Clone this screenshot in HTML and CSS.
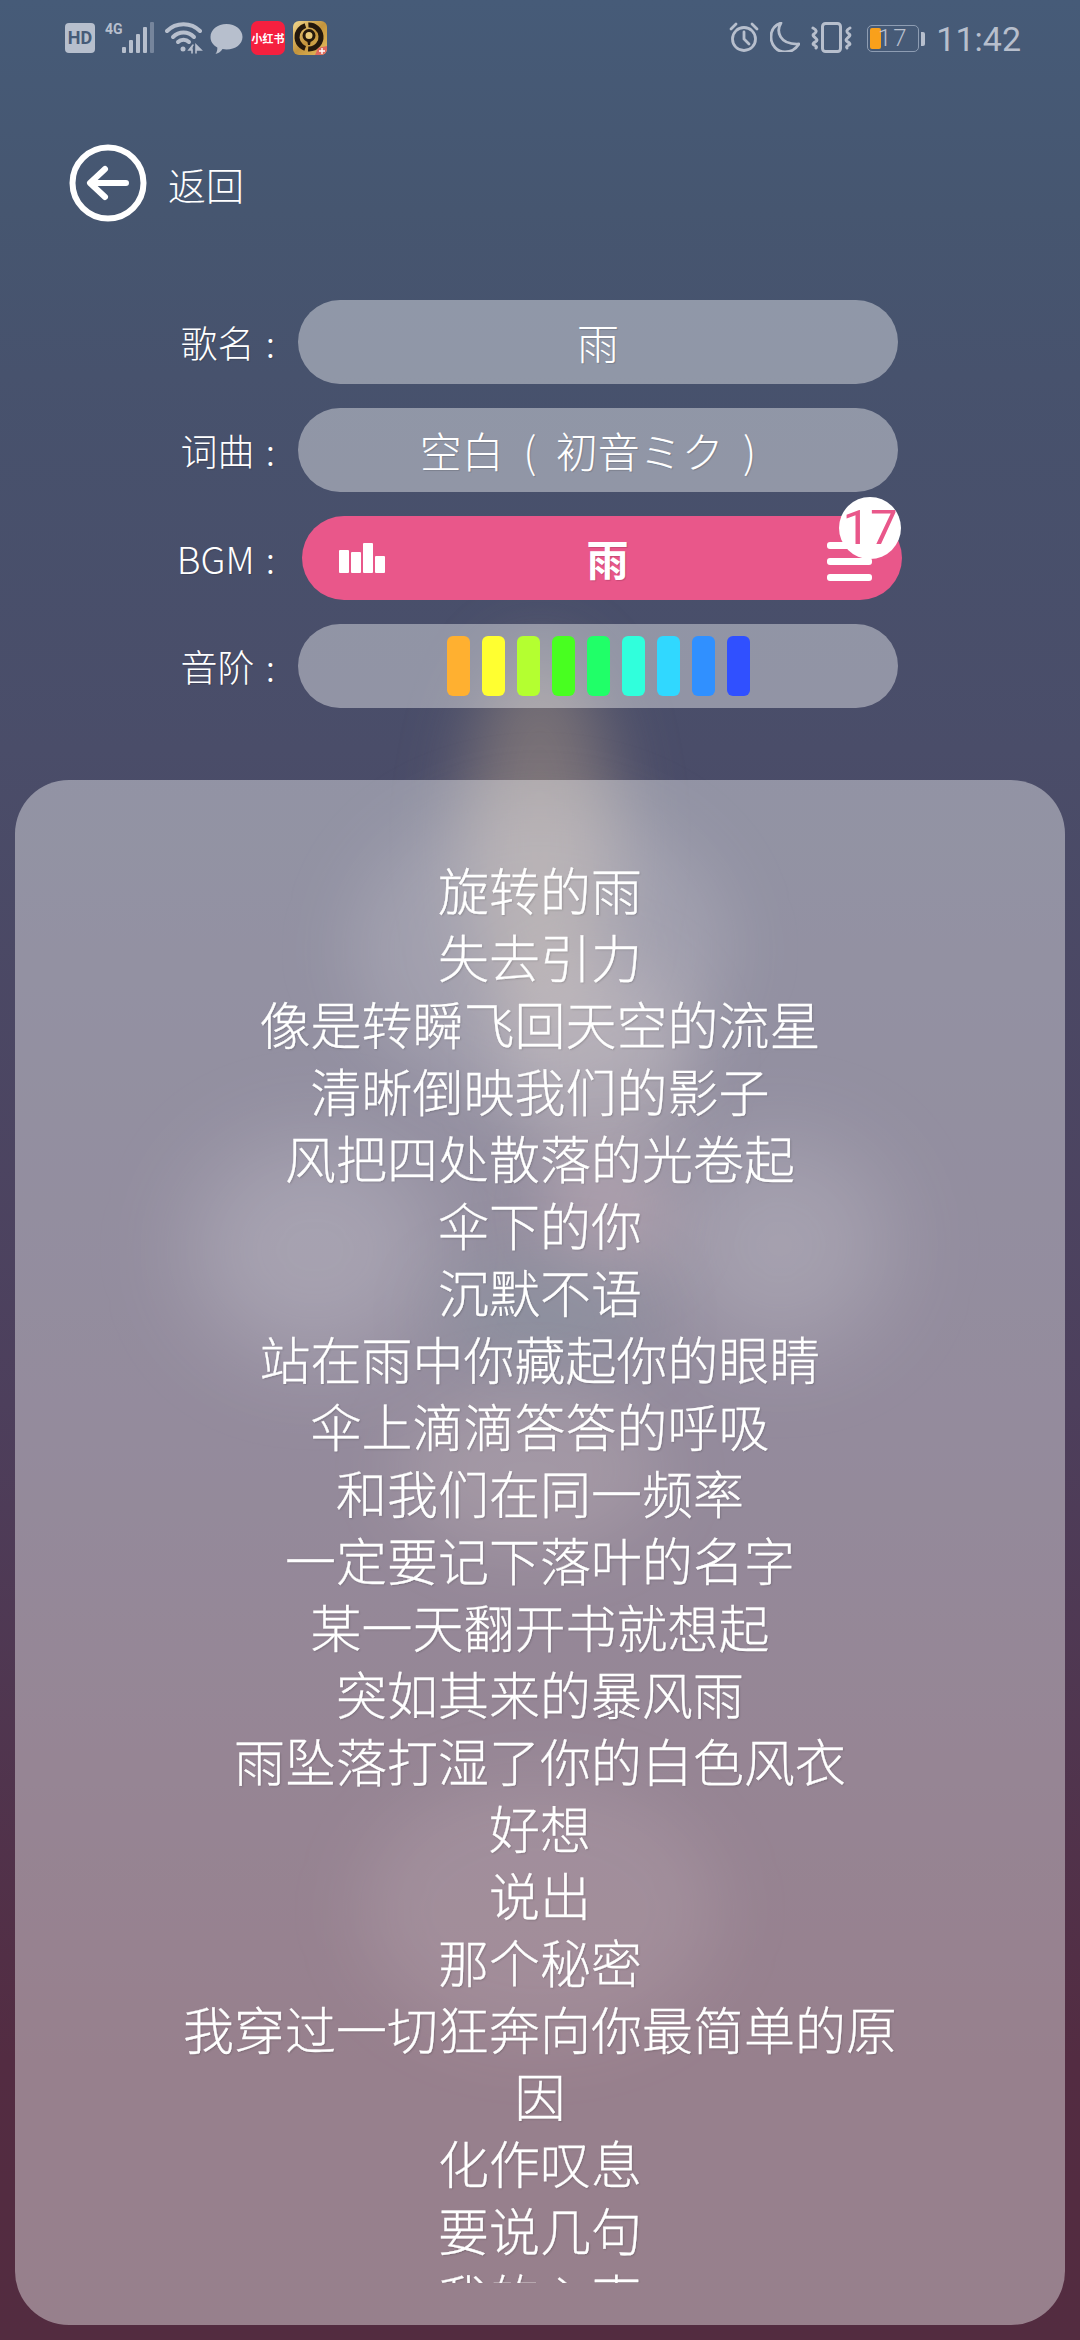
FILE: index.html
```html
<!DOCTYPE html>
<html lang="zh-CN">
<head>
    <meta charset="UTF-8">
    <meta name="viewport" content="width=device-width, initial-scale=1.0">
    <title>雨</title>
    <link rel="stylesheet" href="styles.css">
</head>
<body>
    <!-- blurred cover picture behind everything -->
    <div class="cover">
        <div class="blob blob-neck"></div>
        <div class="blob blob-head"></div>
        <div class="blob blob-streak"></div>
        <div class="blob blob-hair-left"></div>
        <div class="blob blob-hair-right"></div>
        <div class="blob blob-cheek"></div>
        <div class="blob blob-dark"></div>
        <div class="blob blob-chest"></div>
        <div class="blob blob-skirt"></div>
    </div>

    <div class="page">
        <div class="status-bar">
            <div class="status-left">
                <svg class="icon-hd" width="30" height="30" viewBox="0 0 30 30">
                    <rect width="30" height="30" rx="4" fill="#b7bfcd"/>
                    <text x="15" y="21" text-anchor="middle" class="hd-text">HD</text>
                </svg>
                <svg class="icon-signal" width="50" height="32" viewBox="0 0 50 32">
                    <text x="0" y="12" class="net-text">4G</text>
                    <rect x="17" y="25" width="4" height="6" rx="1" fill="#b7bfcd"/>
                    <rect x="24" y="18" width="4" height="13" rx="1" fill="#b7bfcd"/>
                    <rect x="31" y="12" width="4" height="19" rx="1" fill="#b7bfcd"/>
                    <rect x="38" y="5" width="4" height="26" rx="1" fill="#b7bfcd"/>
                    <rect x="45" y="0" width="4" height="31" rx="1" fill="#76859c"/>
                </svg>
                <svg class="icon-wifi" width="38" height="32" viewBox="0 0 38 32" fill="none" stroke="#b7bfcd" stroke-width="4" stroke-linecap="round">
                    <path d="M2 9C11 0 26 0 35 9"/>
                    <path d="M8 15C14 9 23 9 29 15"/>
                    <path d="M13 20C16 17 21 17 24 20"/>
                    <circle cx="18" cy="27" r="2.5" fill="#b7bfcd" stroke="none"/>
                    <path d="M28 23L24 28H27V31M31 31V23L36 28H31" stroke-width="1.6" fill="#b7bfcd"/>
                </svg>
                <svg class="icon-msg" width="33" height="32" viewBox="0 0 33 32">
                    <path d="M16.5 1C25.6 1 32.5 6.800 32.500 14C32.500 21.200 25.600 26.500 16.500 26.500C15 26.500 13.700 26.400 12.500 26.100C11 28.500 8.500 30.500 5.500 31C7 29 7.500 26.500 7.300 24.500C3 22.200 .5 18.500 .5 14C.5 6.800 7.400 1 16.500 1Z" fill="#b7bfcd"/>
                </svg>
                <div class="app-red">小红书</div>
                <svg class="app-game" width="34" height="34" viewBox="0 0 34 34">
                    <defs>
                        <linearGradient id="gameGold" x1="0" y1="0" x2="1" y2="1">
                            <stop offset="0" stop-color="#f2d88e"/>
                            <stop offset="0.5" stop-color="#c4943c"/>
                            <stop offset="1" stop-color="#e8c060"/>
                        </linearGradient>
                    </defs>
                    <rect width="34" height="34" rx="6" fill="url(#gameGold)"/>
                    <circle cx="16" cy="16" r="12" fill="none" stroke="#24180c" stroke-width="5" stroke-dasharray="30 3 30 3" transform="rotate(-50 16 16)"/>
                    <circle cx="16" cy="14.500" r="5" fill="#e8c878" stroke="#24180c" stroke-width="3"/>
                    <path d="M14 18.500H18L17 24H15Z" fill="#24180c"/>
                    <path d="M22 34L25 27L34 25V28C34 31 31 34 28 34Z" fill="#e0685e"/>
                    <path d="M26 30H32M29 27V33" stroke="#fff" stroke-width="1.400"/>
                </svg>
            </div>
            <div class="status-right">
                <svg class="icon-alarm" width="30" height="30" viewBox="0 0 30 30" fill="none" stroke="#b7bfcd" stroke-width="2.800" stroke-linecap="round">
                    <circle cx="15" cy="17" r="11.500"/>
                    <path d="M15 10V17L20 22"/>
                    <path d="M2 7L7 2M28 7L23 2"/>
                </svg>
                <svg class="icon-moon" width="30" height="30" viewBox="0 0 30 30">
                    <path d="M11 1C6 9 9 23 29 22C26 27 21 30 15 30C7 30 1 23 1 15C1 8 5 3 11 1Z" fill="none" stroke="#b7bfcd" stroke-width="2.800" stroke-linejoin="round"/>
                </svg>
                <svg class="icon-vibrate" width="42" height="31" viewBox="0 0 42 31" fill="none" stroke="#b7bfcd" stroke-linecap="round">
                    <rect x="11.500" y="1.500" width="18" height="28" rx="3" stroke-width="3"/>
                    <path d="M2 6C6 8 6 10 3 12C0 14 6 16 6 18C6 20 0 21 3 23C5 24 6 25 5 26" stroke-width="3"/>
                    <path d="M39 6C35 8 35 10 38 12C41 14 35 16 35 18C35 20 41 21 38 23C36 24 35 25 36 26" stroke-width="3"/>
                </svg>
                <div class="battery">
                    <div class="battery-body">
                        <div class="battery-fill"></div>
                        <span class="battery-text">17</span>
                    </div>
                    <div class="battery-nub"></div>
                </div>
                <span class="clock">11:42</span>
            </div>
        </div>

        <div class="back-row">
            <svg class="back-icon" width="78" height="78" viewBox="0 0 78 78" fill="none" stroke="#fff" stroke-linecap="round" stroke-linejoin="round">
                <circle cx="39" cy="39" r="35.500" stroke-width="6"/>
                <path d="M57 39H22M36 25L21 39L36 53" stroke-width="6"/>
            </svg>
            <span class="back-text">返回</span>
        </div>

        <div class="form">
            <div class="form-row">
                <span class="form-label">歌名 :</span>
                <div class="pill">雨</div>
            </div>
            <div class="form-row">
                <span class="form-label">词曲 :</span>
                <div class="pill pill-credit">空白 ( 初音ミク )</div>
            </div>
            <div class="form-row">
                <span class="form-label">BGM :</span>
                <div class="pill pill-bgm">
                    <svg class="bgm-bars" width="47" height="30" viewBox="0 0 47 30" fill="#fff">
                        <rect x="0" y="7" width="10" height="23" rx="1"/>
                        <rect x="12" y="9" width="10" height="21" rx="1"/>
                        <rect x="24" y="0" width="10" height="30" rx="1"/>
                        <rect x="36" y="13" width="10" height="17" rx="1"/>
                    </svg>
                    <span class="bgm-name">雨</span>
                    <div class="bgm-menu">
                        <span class="menu-line"></span>
                        <span class="menu-line"></span>
                        <span class="menu-line"></span>
                        <span class="bgm-badge">17</span>
                    </div>
                </div>
            </div>
            <div class="form-row">
                <span class="form-label">音阶 :</span>
                <div class="pill pill-scale">
                    <span class="note note-1"></span>
                    <span class="note note-2"></span>
                    <span class="note note-3"></span>
                    <span class="note note-4"></span>
                    <span class="note note-5"></span>
                    <span class="note note-6"></span>
                    <span class="note note-7"></span>
                    <span class="note note-8"></span>
                    <span class="note note-9"></span>
                </div>
            </div>
        </div>

        <div class="lyrics-panel">
            <div class="lyrics">
                <p>旋转的雨</p>
                <p>失去引力</p>
                <p>像是转瞬飞回天空的流星</p>
                <p>清晰倒映我们的影子</p>
                <p>风把四处散落的光卷起</p>
                <p>伞下的你</p>
                <p>沉默不语</p>
                <p>站在雨中你藏起你的眼睛</p>
                <p>伞上滴滴答答的呼吸</p>
                <p>和我们在同一频率</p>
                <p>一定要记下落叶的名字</p>
                <p>某一天翻开书就想起</p>
                <p>突如其来的暴风雨</p>
                <p>雨坠落打湿了你的白色风衣</p>
                <p>好想</p>
                <p>说出</p>
                <p>那个秘密</p>
                <p>我穿过一切狂奔向你最简单的原因</p>
                <p>化作叹息</p>
                <p>要说几句</p>
                <p>我的心声</p>
            </div>
        </div>
    </div>
</body>
</html>
```

FILE: styles.css
```css
* {
    box-sizing: border-box;
}

body {
    margin: 0;
    width: 1080px;
    height: 2340px;
    overflow: hidden;
    position: relative;
    font-family: "Noto Sans CJK SC", "Noto Sans", sans-serif;
    font-weight: 300;
    color: #fff;
    background: linear-gradient(180deg, #465b78 0%, #465670 9%, #47526d 16%, #4a4d69 32%, #4d3f5c 60%, #532c42 88%, #532c40 100%);
}

/* blurred picture */
.cover {
    position: absolute;
    inset: 0;
    overflow: hidden;
}

.blob {
    position: absolute;
    border-radius: 50%;
    filter: blur(34px);
}

.blob-neck {
    left: 465px;
    top: 650px;
    width: 150px;
    height: 380px;
    background: rgba(195, 170, 140, 0.4);
}

.blob-head {
    left: 350px;
    top: 800px;
    width: 380px;
    height: 300px;
    background: rgba(215, 210, 215, 0.18);
}

.blob-streak {
    left: 500px;
    top: 960px;
    width: 190px;
    height: 200px;
    background: rgba(225, 205, 190, 0.25);
}

.blob-hair-left {
    left: 190px;
    top: 1140px;
    width: 250px;
    height: 220px;
    filter: blur(45px);
    background: rgba(225, 225, 230, 0.22);
}

.blob-hair-right {
    left: 670px;
    top: 1140px;
    width: 220px;
    height: 210px;
    filter: blur(45px);
    background: rgba(225, 225, 230, 0.2);
}

.blob-cheek {
    left: 540px;
    top: 1150px;
    width: 130px;
    height: 120px;
    background: rgba(225, 170, 175, 0.28);
}

.blob-dark {
    left: 440px;
    top: 1270px;
    width: 210px;
    height: 90px;
    background: rgba(50, 85, 100, 0.38);
}

.blob-chest {
    left: 400px;
    top: 1390px;
    width: 260px;
    height: 160px;
    background: rgba(215, 190, 175, 0.18);
}

.blob-skirt {
    left: 360px;
    top: 1780px;
    width: 360px;
    height: 260px;
    background: rgba(215, 185, 190, 0.14);
}

.page {
    position: relative;
    height: 100%;
    display: flex;
    flex-direction: column;
}

/* status bar */
.status-bar {
    height: 75px;
    padding: 21px 59px 0 65px;
    display: flex;
    justify-content: space-between;
    align-items: flex-start;
}

.status-left,
.status-right {
    display: flex;
    align-items: flex-start;
}

.icon-hd {
    margin-top: 2px;
}

.hd-text {
    font-family: "Roboto", sans-serif;
    font-size: 18px;
    font-weight: 700;
    fill: #465b78;
}

.icon-signal {
    margin-left: 10px;
    margin-top: 1px;
}

.net-text {
    font-family: "Roboto", sans-serif;
    font-size: 14px;
    font-weight: 700;
    fill: #b7bfcd;
}

.icon-wifi {
    margin-left: 10px;
    margin-top: 1px;
}

.icon-msg {
    margin-left: 7px;
    margin-top: 2px;
}

.app-red {
    width: 34px;
    height: 34px;
    margin-left: 8px;
    border-radius: 7px;
    background: #f5203f;
    color: #fff;
    font-size: 11px;
    font-weight: 700;
    line-height: 34px;
    text-align: center;
    white-space: nowrap;
}

.app-game {
    margin-left: 8px;
}

.status-right {
    margin-top: 1px;
}

.icon-moon {
    margin-left: 11px;
}

.icon-vibrate {
    margin-left: 11px;
}

.battery {
    display: flex;
    align-items: center;
    margin-left: 14px;
    margin-top: 3px;
}

.battery-body {
    position: relative;
    width: 52px;
    height: 27px;
    border: 1.5px solid #8e9db3;
    border-radius: 5px;
    text-align: center;
}

.battery-fill {
    position: absolute;
    left: 2px;
    top: 2px;
    bottom: 2px;
    width: 11px;
    background: #f9a01b;
    border-radius: 2px;
}

.battery-text {
    position: relative;
    font-family: "Roboto", sans-serif;
    font-size: 24px;
    font-weight: 300;
    line-height: 24px;
    letter-spacing: 2px;
    color: #b7bfcd;
    display: block;
}

.battery-nub {
    width: 4px;
    height: 14px;
    margin-left: 2px;
    background: #b7bfcd;
    border-radius: 0 2px 2px 0;
}

.clock {
    margin-left: 11px;
    font-family: "Roboto", sans-serif;
    font-size: 34px;
    font-weight: 400;
    line-height: 34px;
    color: #b7bfcd;
}

/* back button */
.back-row {
    margin-top: 69px;
    padding-left: 69px;
    display: flex;
    align-items: center;
    height: 78px;
}

.back-text {
    margin-left: 21px;
    font-size: 38px;
    line-height: 78px;
    margin-top: 1px;
}

/* form */
.form {
    margin-top: 78px;
    display: flex;
    flex-direction: column;
    gap: 24px;
}

.form-row {
    display: flex;
    align-items: center;
    height: 84px;
}

.form-label {
    width: 275px;
    font-size: 37px;
    word-spacing: 3px;
    text-align: right;
    white-space: nowrap;
    text-shadow: 1px 1px 1px rgba(0, 0, 0, 0.15);
}

.pill {
    width: 600px;
    height: 84px;
    margin-left: 23px;
    border-radius: 42px;
    background: rgba(255, 255, 255, 0.4);
    font-size: 42px;
    line-height: 84px;
    text-align: center;
    text-shadow: 1px 1px 1px rgba(0, 0, 0, 0.15);
}

.pill-credit {
    padding-right: 20px;
    word-spacing: 10px;
}

.pill-bgm {
    margin-left: 27px;
    padding: 0 30px 0 37px;
    display: flex;
    align-items: center;
    justify-content: space-between;
    background: #e9578a;
}

.bgm-bars {
    margin-top: -1px;
}

.bgm-name {
    font-size: 42px;
    font-weight: 700;
    line-height: 84px;
    margin-left: 2px;
}

.bgm-menu {
    position: relative;
    width: 45px;
    display: flex;
    flex-direction: column;
    gap: 9px;
    margin-top: 6px;
}

.menu-line {
    height: 7px;
    border-radius: 3px;
    background: #fff;
}

.bgm-badge {
    position: absolute;
    left: 12px;
    top: -45px;
    width: 62px;
    height: 62px;
    border-radius: 50%;
    background: #fff;
    color: #e9578a;
    font-family: "Roboto", sans-serif;
    font-size: 49px;
    font-weight: 400;
    line-height: 62px;
    text-align: center;
    text-shadow: none;
}

.pill-scale {
    display: flex;
    align-items: center;
    justify-content: center;
    gap: 12px;
}

.note {
    width: 23px;
    height: 60px;
    border-radius: 6px;
}

.note-1 { background: #ffb030; }
.note-2 { background: #ffff30; }
.note-3 { background: #b4ff30; }
.note-4 { background: #48ff20; }
.note-5 { background: #20ff68; }
.note-6 { background: #30ffdc; }
.note-7 { background: #30d8ff; }
.note-8 { background: #3090ff; }
.note-9 { background: #3050ff; }

/* lyrics */
.lyrics-panel {
    width: 1050px;
    height: 1545px;
    margin: 72px 0 0 15px;
    padding-top: 76px;
    border-radius: 54px;
    background: rgba(255, 255, 255, 0.4);
}

.lyrics {
    width: 730px;
    height: 1427px;
    margin: 0 auto;
    overflow: hidden;
    font-size: 51px;
    line-height: 67px;
    text-align: center;
    -webkit-text-stroke: 0.3px #fff;
    text-shadow: 1px 1px 2px rgba(0, 0, 0, 0.18);
}

.lyrics p {
    margin: 0;
}
```
